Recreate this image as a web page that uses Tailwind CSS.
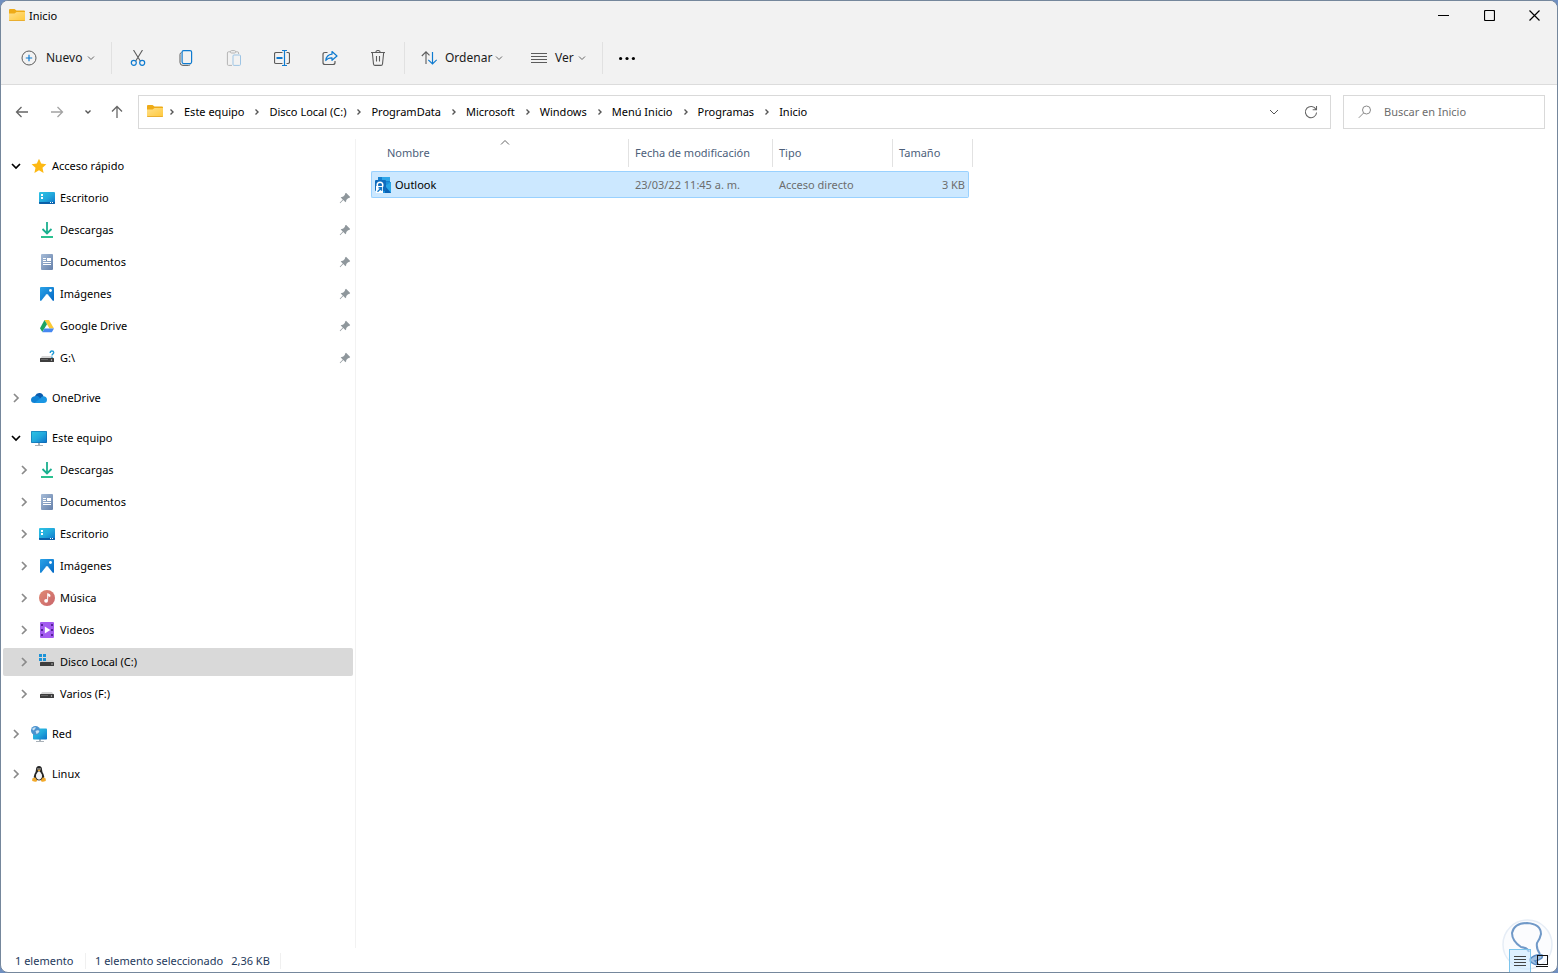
<!DOCTYPE html>
<html lang="es">
<head>
  <meta charset="UTF-8" />
  <meta name="viewport" content="width=device-width, initial-scale=1.0" />
  <title>Inicio</title>
  <script src="https://cdn.jsdelivr.net/npm/@tailwindcss/browser@4"></script>
</head>
<body class="h-screen bg-[#6f8fc0] font-['Noto_Sans','Open_Sans',sans-serif] text-[11px] leading-4 text-black">

  <!-- icon set -->
  <svg class="absolute size-0" xmlns="http://www.w3.org/2000/svg" aria-hidden="true">
    <defs>
      <linearGradient id="gFolder" x1="0" y1="0" x2="1" y2="1"><stop offset="0" stop-color="#ffe08a" /><stop offset="1" stop-color="#ffc83a" /></linearGradient>
      <linearGradient id="gBlue" x1="0" y1="0" x2="1" y2="1"><stop offset="0" stop-color="#2fc3e3" /><stop offset=".5" stop-color="#22a9dc" /><stop offset="1" stop-color="#0d72c9" /></linearGradient>
      <linearGradient id="gDoc" x1="0" y1="0" x2="1" y2="1"><stop offset="0" stop-color="#a6bcd8" /><stop offset="1" stop-color="#6580aa" /></linearGradient>
      <linearGradient id="gPic" x1="0" y1="0" x2="1" y2="1"><stop offset="0" stop-color="#2aa3e8" /><stop offset="1" stop-color="#0468c4" /></linearGradient>
      <linearGradient id="gMusic" x1="0" y1="0" x2="1" y2="1"><stop offset="0" stop-color="#e08a72" /><stop offset="1" stop-color="#c9656c" /></linearGradient>
    </defs>
    <symbol id="folder" viewBox="0 0 16 16"><path d="M0 2Q0 1 1 1H5.500L7.500 2.500H15Q16 2.500 16 3.500V8H0Z" fill="#eeab17" /><path d="M0 5.500H5.500L7.500 4H16V12Q16 13 15 13H1Q0 13 0 12Z" fill="url(#gFolder)" /><path d="M0 12H16Q16 13 15 13H1Q0 13 0 12Z" fill="#e9ae2f" /></symbol>
    <symbol id="desktop" viewBox="0 0 16 16"><rect y="2" width="16" height="12" rx="1" fill="url(#gBlue)" /><path d="M2 4h2v2H2zM2 7h2v2H2z" fill="#fff" /><path d="M0 12H16V13Q16 14 15 14H1Q0 14 0 13Z" fill="#0b5fa8" /><path d="M11 12h1v1h-1zM13 12h1v1h-1z" fill="#fff" /></symbol>
    <symbol id="download" viewBox="0 0 16 16"><path d="M8 0V11M3.500 7L8 11.500L12.500 7" fill="none" stroke="#1bb08f" stroke-width="1.800" /><path d="M2 15H14" stroke="#2bc190" stroke-width="2" /></symbol>
    <symbol id="document" viewBox="0 0 16 16"><rect x="2" y="0" width="12" height="16" rx="1" fill="url(#gDoc)" /><path d="M4 4.500H7M4 6.500H7M4 8.500H12M4 10.500H12" stroke="#fff" /><rect x="8" y="4" width="4" height="3" fill="#fff" /></symbol>
    <symbol id="picture" viewBox="0 0 16 16"><rect x="1" y="1" width="14" height="14" rx="1" fill="url(#gPic)" /><path d="M2 15L7.200 8.500Q8 7.600 8.800 8.500L14 15Z" fill="#fff" /><circle cx="11.500" cy="4.500" r="1.400" fill="#fff" /></symbol>
    <symbol id="gdrive" viewBox="0 0 16 16"><path d="M5.500 2H10L15 10.500H10.500Z" fill="#fcc934" /><path d="M5.500 2L8 6.200L3.300 14L1 10.200Z" fill="#1ea362" /><path d="M5.500 10.500H15L12.800 14.200H3.300Z" fill="#4688f1" /></symbol>
    <symbol id="drive" viewBox="0 0 16 16"><path d="M3 6H13L15 9H1Z" fill="#d5d5d5" /><rect x="1" y="8" width="14" height="4" rx=".6" fill="#3d3d3d" /><path d="M2 9.500H9" stroke="#666" /><circle cx="12.500" cy="10" r=".7" fill="#d8d8d8" /></symbol>
    <symbol id="driveUnknown" viewBox="0 0 16 16"><use href="#drive" /><path d="M11.200 3Q11.300 1 13 1Q14.700 1 14.700 2.600Q14.700 3.600 13.700 4.200Q13 4.700 13 5.600M13 6.800V8" fill="none" stroke="#1f9ad6" stroke-width="1.400" /></symbol>
    <symbol id="driveSystem" viewBox="0 0 16 16"><path d="M3 6H14L15.500 9H1Z" fill="#d0d0d0" /><rect x="1" y="8" width="14" height="4" rx=".6" fill="#3d3d3d" /><circle cx="13" cy="10" r=".7" fill="#d8d8d8" /><path d="M0 0H3V3H0ZM4 0H7V3H4ZM0 4H3V7H0ZM4 4H7V7H4Z" fill="#1b93d8" /></symbol>
    <symbol id="star" viewBox="0 0 16 16"><path d="M8 .8L10.200 5.600L15.400 6.200L11.500 9.700L12.600 14.900L8 12.300L3.400 14.900L4.500 9.700L.6 6.200L5.800 5.600Z" fill="#fdb914" /></symbol>
    <symbol id="cloud" viewBox="0 0 16 16"><path d="M4 6Q5.500 2.700 8.600 3Q11.800 3.300 12.500 6.500L9 10Z" fill="#0a5cad" /><path d="M3.500 6.200Q6 5 8 7L13 13H3.500Q0 13 0 9.700Q.1 6.800 3.500 6.200Z" fill="#1082d4" /><path d="M12.300 6.300Q15.900 6.500 16 9.700Q15.900 13 12.700 13H3.500L9.500 8.200Q10.500 6.300 12.300 6.300Z" fill="#1a96e3" /></symbol>
    <symbol id="monitor" viewBox="0 0 16 16"><path d="M7 13H9V15H7Z" fill="#a9b1b8" /><path d="M4 15.500H12" stroke="#a9b1b8" /><rect y="1" width="16" height="12" rx="1" fill="#0d62a6" /><rect x=".5" y="1.500" width="15" height="11" rx=".6" fill="url(#gBlue)" /></symbol>
    <symbol id="music" viewBox="0 0 16 16"><circle cx="8" cy="8" r="8" fill="url(#gMusic)" /><path d="M8.600 10.700V3.500L11 4.800V6.600L9.500 5.800" fill="#fff" stroke="#fff" stroke-width=".8" /><circle cx="7.100" cy="10.800" r="1.900" fill="#fff" /></symbol>
    <symbol id="video" viewBox="0 0 16 16"><rect x="1" y="0" width="14" height="16" rx="1" fill="#a35bf0" /><path d="M2 2h2v2H2zM2 7h2v2H2zM2 12h2v2H2zM12 2h2v2h-2zM12 7h2v2h-2zM12 12h2v2h-2z" fill="#56249a" /><path d="M5.800 4.500V11.500L11.300 8Z" fill="#fff" /></symbol>
    <symbol id="network" viewBox="0 0 16 16"><path d="M8 13H10V15H8Z" fill="#a9b1b8" /><path d="M5 15.500H13" stroke="#a9b1b8" /><rect x="2" y="2.500" width="14" height="11" rx=".8" fill="url(#gBlue)" /><circle cx="4.500" cy="4.500" r="4.500" fill="#4b93cf" /><path d="M1 3Q3 .5 5 1.500Q4 3.500 2.500 4.500ZM4.500 5Q7 3.500 8.500 5Q7.500 7.800 5.500 8Z" fill="#c8e1f3" /></symbol>
    <symbol id="tux" viewBox="0 0 16 16"><path d="M8 0Q11 0 11 3.500Q11 5.500 12.500 8Q14 11 12.500 13.500L8 14.500L3.500 13.500Q2 11 3.500 8Q5 5.500 5 3.500Q5 0 8 0Z" fill="#252525" /><path d="M8 5Q9.800 6 10.800 8.500Q12 12.500 8 13.800Q4 12.500 5.200 8.500Q6.200 6 8 5Z" fill="#f5f5f5" /><circle cx="7" cy="2.900" r=".7" fill="#fff" /><circle cx="9" cy="2.900" r=".7" fill="#fff" /><path d="M6.500 4.200L8 3.500L9.500 4.200L8 5.500Z" fill="#f2a92b" /><path d="M1.300 12.500L4 11.200L6.300 14.500Q5.500 16.200 4 15.700L1.200 15ZM14.700 12.500L12 11.200L9.700 14.500Q10.500 16.200 12 15.700L14.800 15Z" fill="#f2a92b" /></symbol>
    <symbol id="pin" viewBox="0 0 12 12"><path d="M7 .8L11.200 5L10 6.200L9.300 6L7.300 8Q7.500 9.400 6.500 10.300L4.300 8.100L1.200 11.200L.7 10.700L3.800 7.600L1.700 5.500Q2.600 4.500 4 4.700L6 2.700L5.800 2Z" fill="#8f979c" /></symbol>
    <symbol id="right" viewBox="0 0 8 10"><path d="M2 1L6 5L2 9" fill="none" stroke="currentColor" stroke-width="1.700" /></symbol>
    <symbol id="down" viewBox="0 0 10 8"><path d="M1 2L5 6L9 2" fill="none" stroke="currentColor" stroke-width="1.700" /></symbol>
    <symbol id="downThin" viewBox="0 0 8 8"><path d="M1 2.500L4 5.500L7 2.500" fill="none" stroke="currentColor" /></symbol>
    <symbol id="crumb" viewBox="0 0 6 8"><path d="M1.500 1.500L4 4L1.500 6.500" fill="none" stroke="#555" stroke-width="1.400" /></symbol>
  </svg>

  <div class="relative flex h-full flex-col overflow-hidden rounded-lg border border-[#75879c] bg-white">

    <!-- title bar -->
    <header class="flex h-[29px] shrink-0 items-center bg-[#f2f2f2] pl-2">
      <svg class="size-4"><use href="#folder" /></svg>
      <h1 class="ml-1">Inicio</h1>
      <div class="ml-auto flex h-full">
        <button class="grid w-[45px] place-items-center" aria-label="Minimizar"><svg class="size-[11px]" viewBox="0 0 11 11"><path d="M0 5.500H11" stroke="#000" /></svg></button>
        <button class="grid w-[46px] place-items-center" aria-label="Maximizar"><svg class="size-[11px]" viewBox="0 0 11 11"><rect x=".5" y=".5" width="10" height="10" rx="1" fill="none" stroke="#000" stroke-width="1.200" /></svg></button>
        <button class="grid w-[45px] place-items-center" aria-label="Cerrar"><svg class="size-[11px]" viewBox="0 0 11 11"><path d="M.5 .5L10.500 10.500M10.500 .5L.5 10.500" stroke="#000" stroke-width="1.200" /></svg></button>
      </div>
    </header>

    <!-- command bar -->
    <div class="flex h-[55px] shrink-0 items-center border-b border-[#dcdcdc] bg-[#f2f2f2] pt-0.5 text-xs text-[#1a1a1a]">
      <button class="flex h-8 w-[110px] items-center pr-4 pl-5">
        <svg class="size-4" viewBox="0 0 16 16" fill="none"><circle cx="8" cy="8" r="7" stroke="#5c5c5c" /><path d="M8 4.800V11.200M4.800 8H11.200" stroke="#0f7bd0" stroke-width="1.200" /></svg>
        <span class="ml-[9px]">Nuevo</span>
        <svg class="ml-auto size-2 text-[#666]"><use href="#downThin" /></svg>
      </button>
      <div class="mr-0.5 h-8 w-px bg-[#e1e1e1]"></div>
      <button class="grid h-8 w-12 place-items-center" aria-label="Cortar">
        <svg class="size-4" viewBox="0 0 16 16" fill="none"><path d="M3.500 0L10.300 11M12.500 0L5.700 11" stroke="#5c5c5c" stroke-width="1.100" /><circle cx="3.800" cy="12.800" r="2.500" stroke="#0f7bd0" stroke-width="1.200" /><circle cx="12.200" cy="12.800" r="2.500" stroke="#0f7bd0" stroke-width="1.200" /></svg>
      </button>
      <button class="grid h-8 w-12 place-items-center" aria-label="Copiar">
        <svg class="size-4" viewBox="0 0 16 16" fill="none"><path d="M3.500 2.500Q2 3 2 4.500V12.500Q2 15.400 5 15.400H10.500Q11.700 15.400 12.300 14.500" stroke="#5c5c5c" /><rect x="4.100" y=".6" width="9.500" height="13" rx="1.500" stroke="#0f7bd0" stroke-width="1.200" /></svg>
      </button>
      <button class="grid h-8 w-12 place-items-center" aria-label="Pegar">
        <svg class="size-4" viewBox="0 0 16 16" fill="none"><path d="M6 15.400H2.500Q1.400 15.400 1.400 14.300V3Q1.400 1.800 2.500 1.800H4.500M9.500 1.800H11.500Q12.600 1.800 12.600 3V4" stroke="#b4b4b4" /><rect x="4.500" y=".6" width="5" height="2.400" rx="1" stroke="#b4b4b4" /><rect x="7" y="5" width="7.500" height="10.400" rx="1" stroke="#9dc4e4" /></svg>
      </button>
      <button class="grid h-8 w-12 place-items-center" aria-label="Cambiar nombre">
        <svg class="size-4" viewBox="0 0 16 16" fill="none"><path d="M8.500 13.500H2Q.5 13.500 .5 12V4Q.5 2.500 2 2.500H8.500M12.500 2.500H14Q15.500 2.500 15.500 4V12Q15.500 13.500 14 13.500H12.500" stroke="#5c5c5c" stroke-width="1.200" /><path d="M2.500 8H8.500" stroke="#0f7bd0" stroke-width="2" /><path d="M8 .5H13M8 15.500H13M10.500 .5V15.500" stroke="#0f7bd0" stroke-width="1.200" /></svg>
      </button>
      <button class="grid h-8 w-12 place-items-center" aria-label="Compartir">
        <svg class="size-4" viewBox="0 0 16 16" fill="none"><path d="M5.500 2.500H3Q1 2.500 1 4.500V12.500Q1 14.500 3 14.500H11Q13 14.500 13 12.500V11" stroke="#5c5c5c" stroke-width="1.200" /><path d="M10 1.500L15 6L10 10.300V7.800Q6 7.600 3.800 10.500Q4.400 4.700 10 4.200Z" stroke="#0f7bd0" stroke-width="1.200" stroke-linejoin="round" /></svg>
      </button>
      <button class="grid h-8 w-12 place-items-center" aria-label="Eliminar">
        <svg class="size-4" viewBox="0 0 16 16" fill="none" stroke="#5c5c5c" stroke-width="1.100"><path d="M1 2.500H15M5.800 2.200Q6 .5 8 .5Q10 .5 10.200 2.200M2.300 2.500L3.500 14Q3.700 15.400 5 15.400H11Q12.300 15.400 12.500 14L13.700 2.500M6.500 6V11.500M9.500 6V11.500" /></svg>
      </button>
      <div class="mx-0.5 h-8 w-px bg-[#e1e1e1]"></div>
      <button class="flex h-8 w-[110px] items-center px-3.5">
        <svg class="size-4" viewBox="0 0 16 16" fill="none"><path d="M5 14V2M.8 6L5 1.800L8.500 5.300" stroke="#5c5c5c" stroke-width="1.100" /><path d="M11.500 2V14M7.300 9.800L11.500 14L15.700 9.800" stroke="#0f7bd0" stroke-width="1.200" /></svg>
        <span class="ml-2">Ordenar</span>
        <svg class="ml-auto size-2 text-[#666]"><use href="#downThin" /></svg>
      </button>
      <button class="flex h-8 w-[83px] items-center px-3.5">
        <svg class="size-4" viewBox="0 0 16 16"><path d="M0 3.500H16M0 6.500H16M0 9.500H16M0 12.500H16" stroke="#5c5c5c" /></svg>
        <span class="ml-2">Ver</span>
        <svg class="ml-auto size-2 text-[#666]"><use href="#downThin" /></svg>
      </button>
      <div class="mx-0.5 h-8 w-px bg-[#e1e1e1]"></div>
      <button class="grid h-8 w-11 place-items-center" aria-label="Ver más">
        <svg class="size-4" viewBox="0 0 16 16"><circle cx="1.600" cy="8.500" r="1.600" /><circle cx="8" cy="8.500" r="1.600" /><circle cx="14.400" cy="8.500" r="1.600" /></svg>
      </button>
    </div>

    <!-- address bar -->
    <div class="mt-2.5 flex h-[34px] shrink-0 items-stretch pr-3 pl-1">
      <button class="grid w-[34px] place-items-center" aria-label="Atrás"><svg class="size-3.5" viewBox="0 0 14 14" fill="none"><path d="M13 7H1.500M6.500 2L1.500 7L6.500 12" stroke="#666" stroke-width="1.300" /></svg></button>
      <button class="grid w-9 place-items-center" aria-label="Adelante"><svg class="size-3.5" viewBox="0 0 14 14" fill="none"><path d="M1 7H12.500M7.500 2L12.500 7L7.500 12" stroke="#a3a3a3" stroke-width="1.300" /></svg></button>
      <button class="grid w-[25px] place-items-center text-[#555]" aria-label="Ubicaciones recientes"><svg class="size-2" viewBox="0 0 8 8"><path d="M1.500 2.500L4 5L6.500 2.500" fill="none" stroke="currentColor" stroke-width="1.400" /></svg></button>
      <button class="grid w-[34px] place-items-center" aria-label="Subir"><svg class="size-3.5" viewBox="0 0 14 14" fill="none"><path d="M7 13V1.500M2 6.500L7 1.500L12 6.500" stroke="#666" stroke-width="1.300" /></svg></button>
      <div class="ml-1 flex min-w-0 flex-1 items-center border border-[#d9d9d9] pl-2">
        <svg class="size-4"><use href="#folder" /></svg>
        <nav class="flex items-center gap-[9px] pl-1.5" aria-label="Ruta">
          <svg class="h-2 w-1.5"><use href="#crumb" /></svg>
          <a href="#" class="pr-px">Este equipo</a><svg class="h-2 w-1.5"><use href="#crumb" /></svg>
          <a href="#" class="pr-px">Disco Local (C:)</a><svg class="h-2 w-1.5"><use href="#crumb" /></svg>
          <a href="#" class="pr-px">ProgramData</a><svg class="h-2 w-1.5"><use href="#crumb" /></svg>
          <a href="#" class="pr-px">Microsoft</a><svg class="h-2 w-1.5"><use href="#crumb" /></svg>
          <a href="#" class="pr-px">Windows</a><svg class="h-2 w-1.5"><use href="#crumb" /></svg>
          <a href="#" class="pr-px">Menú Inicio</a><svg class="h-2 w-1.5"><use href="#crumb" /></svg>
          <a href="#" class="pr-px">Programas</a><svg class="h-2 w-1.5"><use href="#crumb" /></svg>
          <a href="#">Inicio</a>
        </nav>
        <button class="ml-auto grid h-full w-9 place-items-center text-[#555]" aria-label="Ubicaciones anteriores"><svg class="h-2 w-2.5" viewBox="0 0 10 8"><path d="M1 2L5 6L9 2" fill="none" stroke="currentColor" /></svg></button>
        <button class="grid h-full w-[38px] place-items-center" aria-label="Actualizar"><svg class="size-3.5" viewBox="0 0 14 14" fill="none"><path d="M12 4.500A5.600 5.600 0 1 0 12.600 7.500M12.500 1V4.800H8.700" stroke="#666" stroke-width="1.100" /></svg></button>
      </div>
      <label class="ml-3 flex w-[202px] items-center border border-[#d9d9d9] pl-3.5">
        <svg class="size-3.5 shrink-0" viewBox="0 0 14 14" fill="none" stroke="#8a8a8a"><circle cx="8.500" cy="5" r="4" /><path d="M5.600 8L.8 12.800" /></svg>
        <input type="search" aria-label="Buscar" placeholder="Buscar en Inicio" class="ml-3 w-full min-w-0 outline-none placeholder:text-[#6d6d6d]" />
      </label>
    </div>

    <div class="mt-2.5 flex min-h-0 flex-1">
      <!-- navigation pane -->
      <aside class="w-[355px] shrink-0 overflow-hidden border-r border-[#f2f2f2] pt-[13px] pl-0.5">
        <ul class="flex w-[350px] flex-col gap-1">
          <li><a href="#" class="flex h-7 items-center pl-2"><svg class="h-2 w-2.5"><use href="#down" /></svg><svg class="ml-2.5 size-4"><use href="#star" /></svg><span class="ml-[5px]">Acceso rápido</span></a></li>
          <li><a href="#" class="flex h-7 items-center pr-0.5 pl-9"><svg class="size-4"><use href="#desktop" /></svg><span class="ml-[5px]">Escritorio</span><svg class="ml-auto size-3"><use href="#pin" /></svg></a></li>
          <li><a href="#" class="flex h-7 items-center pr-0.5 pl-9"><svg class="size-4"><use href="#download" /></svg><span class="ml-[5px]">Descargas</span><svg class="ml-auto size-3"><use href="#pin" /></svg></a></li>
          <li><a href="#" class="flex h-7 items-center pr-0.5 pl-9"><svg class="size-4"><use href="#document" /></svg><span class="ml-[5px]">Documentos</span><svg class="ml-auto size-3"><use href="#pin" /></svg></a></li>
          <li><a href="#" class="flex h-7 items-center pr-0.5 pl-9"><svg class="size-4"><use href="#picture" /></svg><span class="ml-[5px]">Imágenes</span><svg class="ml-auto size-3"><use href="#pin" /></svg></a></li>
          <li><a href="#" class="flex h-7 items-center pr-0.5 pl-9"><svg class="size-4"><use href="#gdrive" /></svg><span class="ml-[5px]">Google Drive</span><svg class="ml-auto size-3"><use href="#pin" /></svg></a></li>
          <li><a href="#" class="flex h-7 items-center pr-0.5 pl-9"><svg class="size-4"><use href="#driveUnknown" /></svg><span class="ml-[5px]">G:\</span><svg class="ml-auto size-3"><use href="#pin" /></svg></a></li>
          <li class="mt-2"><a href="#" class="flex h-7 items-center pl-[9px]"><svg class="h-2.5 w-2 text-[#8a8a8a]"><use href="#right" /></svg><svg class="ml-[11px] size-4"><use href="#cloud" /></svg><span class="ml-[5px]">OneDrive</span></a></li>
          <li class="mt-2"><a href="#" class="flex h-7 items-center pl-2"><svg class="h-2 w-2.5"><use href="#down" /></svg><svg class="ml-2.5 size-4"><use href="#monitor" /></svg><span class="ml-[5px]">Este equipo</span></a></li>
          <li><a href="#" class="flex h-7 items-center pl-[17px]"><svg class="h-2.5 w-2 text-[#8a8a8a]"><use href="#right" /></svg><svg class="ml-[11px] size-4"><use href="#download" /></svg><span class="ml-[5px]">Descargas</span></a></li>
          <li><a href="#" class="flex h-7 items-center pl-[17px]"><svg class="h-2.5 w-2 text-[#8a8a8a]"><use href="#right" /></svg><svg class="ml-[11px] size-4"><use href="#document" /></svg><span class="ml-[5px]">Documentos</span></a></li>
          <li><a href="#" class="flex h-7 items-center pl-[17px]"><svg class="h-2.5 w-2 text-[#8a8a8a]"><use href="#right" /></svg><svg class="ml-[11px] size-4"><use href="#desktop" /></svg><span class="ml-[5px]">Escritorio</span></a></li>
          <li><a href="#" class="flex h-7 items-center pl-[17px]"><svg class="h-2.5 w-2 text-[#8a8a8a]"><use href="#right" /></svg><svg class="ml-[11px] size-4"><use href="#picture" /></svg><span class="ml-[5px]">Imágenes</span></a></li>
          <li><a href="#" class="flex h-7 items-center pl-[17px]"><svg class="h-2.5 w-2 text-[#8a8a8a]"><use href="#right" /></svg><svg class="ml-[11px] size-4"><use href="#music" /></svg><span class="ml-[5px]">Música</span></a></li>
          <li><a href="#" class="flex h-7 items-center pl-[17px]"><svg class="h-2.5 w-2 text-[#8a8a8a]"><use href="#right" /></svg><svg class="ml-[11px] size-4"><use href="#video" /></svg><span class="ml-[5px]">Videos</span></a></li>
          <li><a href="#" aria-current="true" class="flex h-7 items-center rounded-xs bg-[#d9d9d9] pl-[17px]"><svg class="h-2.5 w-2 text-[#8a8a8a]"><use href="#right" /></svg><svg class="ml-[11px] size-4"><use href="#driveSystem" /></svg><span class="ml-[5px]">Disco Local (C:)</span></a></li>
          <li><a href="#" class="flex h-7 items-center pl-[17px]"><svg class="h-2.5 w-2 text-[#8a8a8a]"><use href="#right" /></svg><svg class="ml-[11px] size-4"><use href="#drive" /></svg><span class="ml-[5px]">Varios (F:)</span></a></li>
          <li class="mt-2"><a href="#" class="flex h-7 items-center pl-[9px]"><svg class="h-2.5 w-2 text-[#8a8a8a]"><use href="#right" /></svg><svg class="ml-[11px] size-4"><use href="#network" /></svg><span class="ml-[5px]">Red</span></a></li>
          <li class="mt-2"><a href="#" class="flex h-7 items-center pl-[9px]"><svg class="h-2.5 w-2 text-[#8a8a8a]"><use href="#right" /></svg><svg class="ml-[11px] size-4"><use href="#tux" /></svg><span class="ml-[5px]">Linux</span></a></li>
        </ul>
      </aside>

      <!-- file list -->
      <main class="min-w-0 flex-1 pl-[15px]">
        <table class="w-[598px] table-fixed border-separate border-spacing-0 text-left text-[#6d6d6d]">
          <thead class="text-[#4c607a]">
            <tr class="h-8 align-top">
              <th class="w-[258px] p-0 font-normal">
                <div class="relative flex h-7 items-center border-r border-[#e2e2e2] pl-4">Nombre
                  <svg class="absolute top-0 left-1/2 h-2 w-2.5" viewBox="0 0 10 8"><path d="M1 5.500L5 1.500L9 5.500" fill="none" stroke="#666" /></svg>
                </div>
              </th>
              <th class="w-36 p-0 font-normal"><div class="flex h-7 items-center border-r border-[#e2e2e2] pl-1.5">Fecha de modificación</div></th>
              <th class="w-[120px] p-0 font-normal"><div class="flex h-7 items-center border-r border-[#e2e2e2] pl-1.5">Tipo</div></th>
              <th class="p-0 font-normal"><div class="-mr-1 flex h-7 items-center border-r border-[#e2e2e2] pl-1.5">Tamaño</div></th>
            </tr>
          </thead>
          <tbody>
            <tr class="h-[27px]">
              <td class="rounded-l-xs border-y border-l border-[#99d1ff] bg-[#cce8ff] p-0 pl-[3px] text-black">
                <div class="flex items-center">
                  <svg class="size-4" viewBox="0 0 16 16"><path d="M3 0H15V7H3Z" fill="#1580cf" /><path d="M7 0H15V4H7Z" fill="#2fa6e8" /><path d="M7 5H16V16H7Z" fill="#1b8fdb" /><path d="M10 9L16 5V16Z" fill="#28a5e6" /><path d="M10 9L16 16H10Z" fill="#0b63b5" /><rect y="3" width="11" height="11" rx="1" fill="#0f6cbd" /><circle cx="5" cy="8" r="2.800" fill="none" stroke="#fff" stroke-width="1.500" /><rect x="1" y="9" width="7" height="7" fill="#fff" /><path d="M2.500 14.800L6 11.300M3.500 10.800H6.500V13.800" fill="none" stroke="#1478c8" stroke-width="1.400" /></svg>
                  <span class="ml-1">Outlook</span>
                </div>
              </td>
              <td class="border-y border-[#99d1ff] bg-[#cce8ff] p-0 pl-1.5">23/03/22 11:45 a. m.</td>
              <td class="border-y border-[#99d1ff] bg-[#cce8ff] p-0 pl-1.5">Acceso directo</td>
              <td class="rounded-r-xs border-y border-r border-[#99d1ff] bg-[#cce8ff] p-0 pr-[3px] text-right">3 KB</td>
            </tr>
          </tbody>
        </table>
      </main>
    </div>

    <!-- status bar -->
    <footer class="flex h-6 shrink-0 items-center pt-0.5 pl-3.5 text-[#1e395b]">
      <span class="w-[70px]">1 elemento</span>
      <span class="flex border-l border-[#f0f0f0] pl-[9px]">1 elemento seleccionado<span class="ml-2 border-r border-[#f0f0f0] pr-2.5">2,36 KB</span></span>
      <div class="relative ml-auto flex h-full items-center pr-1">
        <svg class="absolute right-1 bottom-0 h-[53px] w-[51px]" viewBox="0 0 51 53" fill="none"><circle cx="25.500" cy="25.500" r="24.500" fill="#fbfcfe" stroke="#e6edf6" stroke-width="1.500" /><path d="M27 33Q26 29 19 28Q10 22 10 14Q12 4 25 4Q39 5 39 15Q38 20 35 24Q34 30 38 35" stroke="#7099c8" stroke-width="2" /><path d="M28 40Q33 35 40 36Q42 40 33 42L36 45Q33 47 28 42Z" fill="#9fc0e2" stroke="#5b8dc6" stroke-width="1.500" /></svg>
        <button class="relative grid h-6 w-[22px] place-items-center border border-[#7cc4ec] bg-[#cce8ff]/60" aria-label="Detalles"><svg class="h-3 w-3.5" viewBox="0 0 14 12"><path d="M1 1.500H13M1 4.500H13M1 7.500H13M1 10.500H13" stroke="#444" /></svg></button>
        <button class="relative grid h-6 w-[22px] place-items-center" aria-label="Iconos grandes"><svg class="h-3 w-3" viewBox="0 0 12 12"><rect x="1.500" y=".5" width="10" height="9" fill="none" stroke="#111" /><path d="M0 11.500H12" stroke="#111" /></svg></button>
      </div>
    </footer>
  </div>
</body>
</html>
